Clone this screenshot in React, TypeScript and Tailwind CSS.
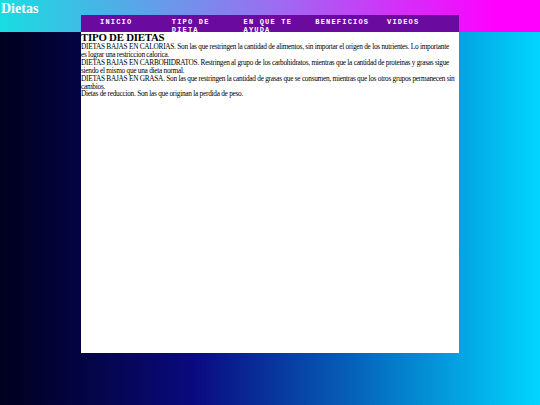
import React from "react";

const items = ["INICIO", "TIPO DE DIETA", "EN QUE TE AYUDA", "BENEFICIOS", "VIDEOS"];

export default function App() {
  return (
    <div
      className="w-[540px] h-[405px] overflow-hidden bg-[linear-gradient(to_right,#00001e_0%,#050550_20%,#0a0a80_36%,#0660b8_65%,#00d6ff_100%)]"
      style={{ fontFamily: '"Liberation Serif", serif' }}
    >
      <div className="h-[32px] bg-[linear-gradient(to_right,#18dde0_0%,#9a6ff0_50%,#ff00ff_92%,#ff00ff_100%)] flex flex-col">
        <h1 className="text-white font-bold text-[14px] leading-[16px] pl-[1px] pt-[1px] h-[15px]">Dietas</h1>
        <nav className="ml-[81px] w-[378px] h-[17px] bg-[#6a0a9e] overflow-hidden">
          <ul className="flex pl-[19px] pt-[3px]">
            {items.map((t) => (
              <li
                key={t}
                className="w-[71.75px] shrink-0 text-white text-[7px] leading-[8px] tracking-[1.2px] font-bold"
                style={{ fontFamily: '"Liberation Mono", monospace' }}
              >
                <div className="w-[52px]">{t}</div>
              </li>
            ))}
          </ul>
        </nav>
      </div>
      <div className="ml-[81px] w-[378px] h-[321px] bg-white text-black">
        <h2 className="font-bold text-[10.8px] leading-[11px] tracking-[-0.2px]">TIPO DE DIETAS</h2>
        <div className="text-[7.3px] leading-[7.9px] tracking-[-0.26px]">
          <p>DIETAS BAJAS EN CALORIAS. Son las que restringen la cantidad de alimentos, sin importar el origen de los nutrientes. Lo importante<br />es lograr una restriccion calorica.</p>
          <p>DIETAS BAJAS EN CARBOHIDRATOS. Restringen al grupo de los carbohidratos, mientras que la cantidad de proteinas y grasas sigue<br />siendo el mismo que una dieta normal.</p>
          <p>DIETAS BAJAS EN GRASA. Son las que restringen la cantidad de grasas que se consumen, mientras que los otros grupos permanecen sin<br />cambios.</p>
          <p>Dietas de reduccion. Son las que originan la perdida de peso.</p>
        </div>
      </div>
    </div>
  );
}
